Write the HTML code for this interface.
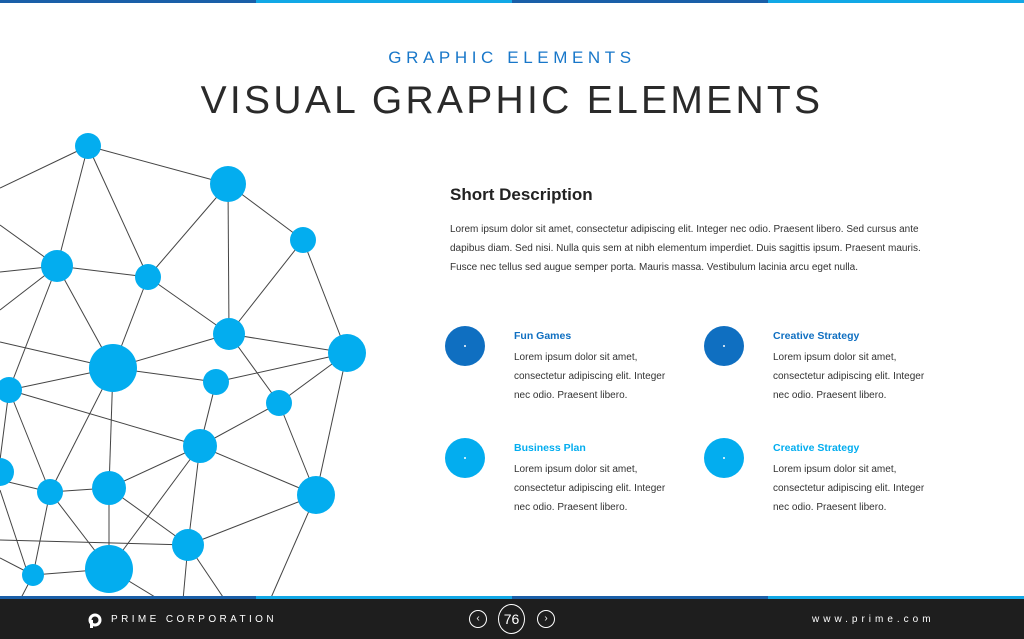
<!DOCTYPE html>
<html><head><meta charset="utf-8"><style>
*{margin:0;padding:0;box-sizing:border-box}
body{width:1024px;height:639px;overflow:hidden;background:#fff;font-family:"Liberation Sans",sans-serif;position:relative}
.bar{position:absolute;left:0;width:1024px;height:3px;display:flex}
.bar div{flex:1}
.d{background:#1a5fa8}.l{background:#12a8e6}
.t1{position:absolute;top:48px;width:100%;text-align:center;color:#1877c9;font-size:17px;letter-spacing:4.6px}
.t2{position:absolute;top:79px;width:100%;text-align:center;color:#2a2a2a;font-size:39px;letter-spacing:3.3px}
.sd{position:absolute;left:450px;top:185px;font-size:17px;font-weight:bold;color:#222}
.p{position:absolute;left:450px;top:220px;width:480px;font-size:10px;line-height:19px;color:#333}
.it{position:absolute;width:165px}
.it .c{position:absolute;left:-69px;top:-4px;width:40px;height:40px;border-radius:50%}
.it .c::after{content:"";position:absolute;left:19px;top:19px;width:2px;height:2px;background:#fff;border-radius:50%}
.it h4{font-size:10.5px;font-weight:bold;margin-bottom:6px}
.it p{font-size:10px;line-height:19px;color:#333}
.foot{position:absolute;top:599px;left:0;width:1024px;height:40px;background:#1e1e1e;color:#fff}
</style></head><body>
<div class="bar" style="top:0"><div class="d"></div><div class="l"></div><div class="d"></div><div class="l"></div></div>
<div class="t1">GRAPHIC ELEMENTS</div>
<div class="t2">VISUAL GRAPHIC ELEMENTS</div>
<svg style="position:absolute;left:0;top:0" width="400" height="600">
<g stroke="#444" stroke-width="1">
<line x1="88" y1="146" x2="228" y2="184"/><line x1="88" y1="146" x2="57" y2="266"/><line x1="88" y1="146" x2="148" y2="277"/><line x1="88" y1="146" x2="0" y2="188"/>
<line x1="228" y1="184" x2="148" y2="277"/><line x1="228" y1="184" x2="229" y2="334"/><line x1="228" y1="184" x2="303" y2="240"/>
<line x1="303" y1="240" x2="229" y2="334"/><line x1="303" y1="240" x2="347" y2="353"/>
<line x1="57" y1="266" x2="148" y2="277"/><line x1="57" y1="266" x2="113" y2="368"/><line x1="57" y1="266" x2="9" y2="390"/><line x1="57" y1="266" x2="0" y2="272"/><line x1="57" y1="266" x2="0" y2="310"/><line x1="57" y1="266" x2="0" y2="225"/>
<line x1="148" y1="277" x2="229" y2="334"/><line x1="148" y1="277" x2="113" y2="368"/>
<line x1="229" y1="334" x2="347" y2="353"/><line x1="229" y1="334" x2="113" y2="368"/><line x1="229" y1="334" x2="279" y2="403"/>
<line x1="347" y1="353" x2="216" y2="382"/><line x1="347" y1="353" x2="279" y2="403"/><line x1="347" y1="353" x2="316" y2="495"/>
<line x1="113" y1="368" x2="216" y2="382"/><line x1="113" y1="368" x2="9" y2="390"/><line x1="113" y1="368" x2="109" y2="488"/><line x1="113" y1="368" x2="50" y2="492"/><line x1="113" y1="368" x2="0" y2="342"/>
<line x1="216" y1="382" x2="200" y2="446"/>
<line x1="9" y1="390" x2="200" y2="446"/><line x1="9" y1="390" x2="50" y2="492"/><line x1="9" y1="390" x2="0" y2="460"/>
<line x1="279" y1="403" x2="200" y2="446"/><line x1="279" y1="403" x2="316" y2="495"/>
<line x1="200" y1="446" x2="109" y2="488"/><line x1="200" y1="446" x2="316" y2="495"/><line x1="200" y1="446" x2="109" y2="569"/><line x1="200" y1="446" x2="188" y2="545"/>
<line x1="109" y1="488" x2="50" y2="492"/><line x1="109" y1="488" x2="109" y2="569"/><line x1="109" y1="488" x2="188" y2="545"/>
<line x1="316" y1="495" x2="188" y2="545"/><line x1="316" y1="495" x2="270" y2="600"/>
<line x1="188" y1="545" x2="0" y2="540"/><line x1="188" y1="545" x2="183" y2="600"/><line x1="188" y1="545" x2="225" y2="600"/>
<line x1="50" y1="492" x2="33" y2="575"/><line x1="50" y1="492" x2="109" y2="569"/><line x1="0" y1="480" x2="50" y2="492"/><line x1="0" y1="490" x2="30" y2="580"/>
<line x1="109" y1="569" x2="33" y2="575"/><line x1="109" y1="569" x2="160" y2="600"/>
<line x1="33" y1="575" x2="20" y2="600"/><line x1="33" y1="575" x2="0" y2="558"/>
</g>
<g fill="#03adef">
<circle cx="88" cy="146" r="13"/><circle cx="228" cy="184" r="18"/><circle cx="303" cy="240" r="13"/><circle cx="57" cy="266" r="16"/><circle cx="148" cy="277" r="13"/><circle cx="229" cy="334" r="16"/><circle cx="347" cy="353" r="19"/><circle cx="113" cy="368" r="24"/><circle cx="216" cy="382" r="13"/><circle cx="9" cy="390" r="13"/><circle cx="279" cy="403" r="13"/><circle cx="200" cy="446" r="17"/><circle cx="0" cy="472" r="14"/><circle cx="50" cy="492" r="13"/><circle cx="109" cy="488" r="17"/><circle cx="316" cy="495" r="19"/><circle cx="188" cy="545" r="16"/><circle cx="109" cy="569" r="24"/><circle cx="33" cy="575" r="11"/>
</g></svg>
<div class="sd">Short Description</div>
<div class="p">Lorem ipsum dolor sit amet, consectetur adipiscing elit. Integer nec odio. Praesent libero. Sed cursus ante dapibus diam. Sed nisi. Nulla quis sem at nibh elementum imperdiet. Duis sagittis ipsum. Praesent mauris. Fusce nec tellus sed augue semper porta. Mauris massa. Vestibulum lacinia arcu eget nulla.</div>
<div class="it" style="left:514px;top:330px"><div class="c" style="background:#0f6fc1"></div><h4 style="color:#0f6fc1">Fun Games</h4><p>Lorem ipsum dolor sit amet, consectetur adipiscing elit. Integer nec odio. Praesent libero.</p></div>
<div class="it" style="left:773px;top:330px"><div class="c" style="background:#0f6fc1"></div><h4 style="color:#0f6fc1">Creative Strategy</h4><p>Lorem ipsum dolor sit amet, consectetur adipiscing elit. Integer nec odio. Praesent libero.</p></div>
<div class="it" style="left:514px;top:442px"><div class="c" style="background:#03adef"></div><h4 style="color:#03adef">Business Plan</h4><p>Lorem ipsum dolor sit amet, consectetur adipiscing elit. Integer nec odio. Praesent libero.</p></div>
<div class="it" style="left:773px;top:442px"><div class="c" style="background:#03adef"></div><h4 style="color:#03adef">Creative Strategy</h4><p>Lorem ipsum dolor sit amet, consectetur adipiscing elit. Integer nec odio. Praesent libero.</p></div>
<div class="bar" style="top:596px"><div class="d"></div><div class="l"></div><div class="d"></div><div class="l"></div></div>
<div class="foot">
<svg style="position:absolute;left:88px;top:14px" width="14" height="15"><circle cx="7" cy="7" r="5" fill="none" stroke="#fff" stroke-width="3"/><rect x="2" y="7" width="3" height="8" fill="#fff"/></svg>
<div style="position:absolute;left:111px;top:15px;font-size:10px;letter-spacing:3.4px">PRIME CORPORATION</div>
<div style="position:absolute;left:469px;top:11px;width:18px;height:18px;border:1px solid #fff;border-radius:50%;font-size:10px;text-align:center;line-height:16px">‹</div>
<div style="position:absolute;left:498px;top:5px;width:27px;height:30px;border:1px solid #fff;border-radius:50%;font-size:14px;text-align:center;line-height:28px">76</div>
<div style="position:absolute;left:537px;top:11px;width:18px;height:18px;border:1px solid #fff;border-radius:50%;font-size:10px;text-align:center;line-height:16px">›</div>
<div style="position:absolute;left:812px;top:15px;font-size:10px;letter-spacing:4px">www.prime.com</div>
</div>
</body></html>
